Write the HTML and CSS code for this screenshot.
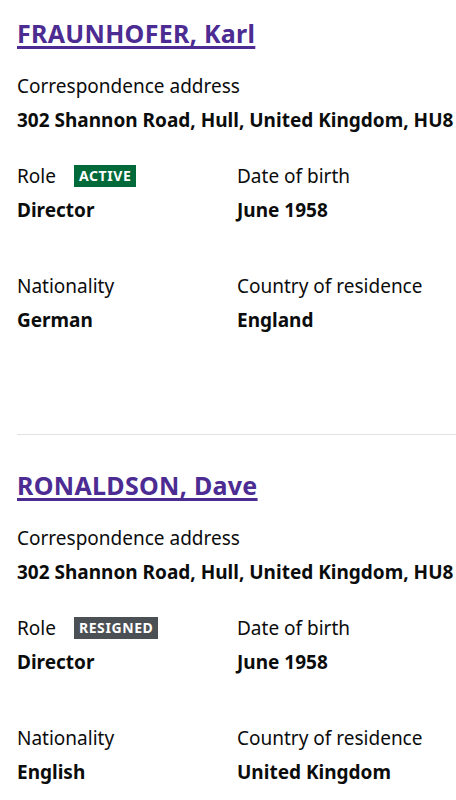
FILE: index.html
```html
<!DOCTYPE html>
<html lang="en">
<head>
<meta charset="utf-8">
<title>Officers</title>
<link rel="stylesheet" href="styles.css">
</head>
<body>
<main class="page">
  <section class="officer">
    <h2 class="officer-name"><a href="#" class="name-link">FRAUNHOFER, Karl</a></h2>
    <dl class="address">
      <dt class="label">Correspondence address</dt>
      <dd class="value">302 Shannon Road, Hull, United Kingdom, HU8 9RT</dd>
    </dl>
    <div class="details">
      <dl class="item">
        <dt class="label">Role <span class="tag tag-active">Active</span></dt>
        <dd class="value">Director</dd>
      </dl>
      <dl class="item">
        <dt class="label">Date of birth</dt>
        <dd class="value">June 1958</dd>
      </dl>
      <dl class="item">
        <dt class="label">Appointed on</dt>
        <dd class="value">1 June 2018</dd>
      </dl>
      <dl class="item">
        <dt class="label">Nationality</dt>
        <dd class="value">German</dd>
      </dl>
      <dl class="item">
        <dt class="label">Country of residence</dt>
        <dd class="value">England</dd>
      </dl>
      <dl class="item">
        <dt class="label">Occupation</dt>
        <dd class="value">Director</dd>
      </dl>
    </div>
  </section>
  <hr class="divider">
  <section class="officer">
    <h2 class="officer-name"><a href="#" class="name-link">RONALDSON, Dave</a></h2>
    <dl class="address">
      <dt class="label">Correspondence address</dt>
      <dd class="value">302 Shannon Road, Hull, United Kingdom, HU8 9RT</dd>
    </dl>
    <div class="details">
      <dl class="item">
        <dt class="label">Role <span class="tag tag-resigned">Resigned</span></dt>
        <dd class="value">Director</dd>
      </dl>
      <dl class="item">
        <dt class="label">Date of birth</dt>
        <dd class="value">June 1958</dd>
      </dl>
      <dl class="item">
        <dt class="label">Appointed on</dt>
        <dd class="value">1 June 2018</dd>
      </dl>
      <dl class="item">
        <dt class="label">Nationality</dt>
        <dd class="value">English</dd>
      </dl>
      <dl class="item">
        <dt class="label">Country of residence</dt>
        <dd class="value">United Kingdom</dd>
      </dl>
      <dl class="item">
        <dt class="label">Occupation</dt>
        <dd class="value">Director</dd>
      </dl>
    </div>
  </section>
</main>
</body>
</html>
```
FILE: styles.css
```css
html, body {
  margin: 0;
  padding: 0;
  background: #ffffff;
  overflow: hidden;
}

body {
  font-family: "Noto Sans", "Liberation Sans", sans-serif;
  color: #0b0c0c;
  width: 456px;
}

.page {
  padding: 18px 0 0 17px;
}

.officer-name {
  margin: 0;
  font-size: 25px;
  line-height: 30px;
  font-weight: 700;
  letter-spacing: 0.3px;
}

.name-link {
  color: #4c2c92;
  text-decoration: underline;
  text-decoration-thickness: 3px;
  text-underline-offset: 3px;
}

dl, dd, dt {
  margin: 0;
  padding: 0;
}

.label {
  font-size: 19px;
  line-height: 25px;
  font-weight: 400;
  white-space: nowrap;
}

.value {
  font-size: 19px;
  line-height: 25px;
  font-weight: 700;
  margin-top: 9px;
  white-space: nowrap;
}

.address {
  margin-top: 26px;
}

.details {
  display: grid;
  grid-template-columns: 220px 220px 220px;
  row-gap: 51px;
  margin-top: 31px;
  width: 660px;
}

.tag {
  display: inline-block;
  vertical-align: 2px;
  margin-left: 13px;
  padding: 0 5px;
  height: 22px;
  line-height: 22px;
  font-size: 14px;
  font-weight: 700;
  letter-spacing: 0.6px;
  text-transform: uppercase;
  color: #ffffff;
}

.tag-active {
  background: #006a3a;
}

.tag-resigned {
  background: #4b5054;
}

.divider {
  margin: 101px 0 0 0;
  border: 0;
  border-top: 1px solid #e3e3e3;
  height: 0;
}

.divider + .officer {
  padding-top: 35px;
}
```
